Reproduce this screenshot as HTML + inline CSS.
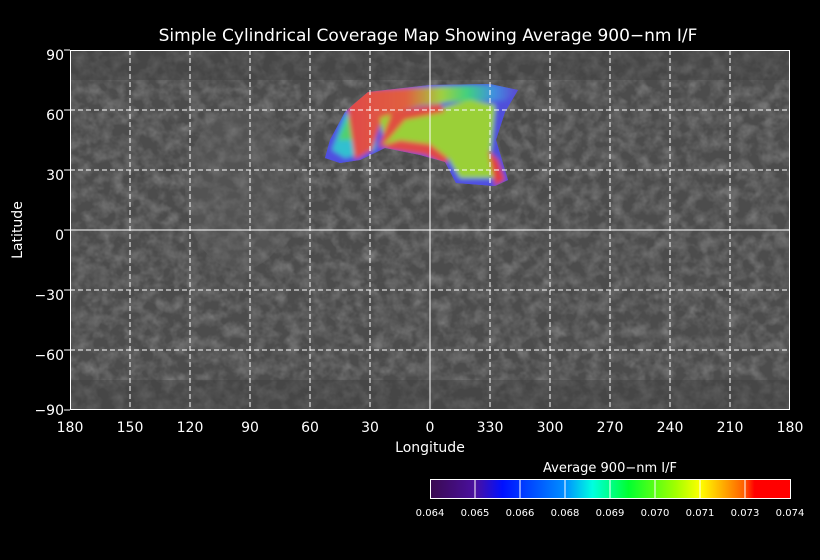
<!DOCTYPE html>
<html><head><meta charset="utf-8"><style>
body{margin:0;background:#000;width:820px;height:560px;overflow:hidden}
svg{display:block}
text{font-family:"DejaVu Sans","Liberation Sans",sans-serif;fill:#fff}
</style></head><body>
<svg width="820" height="560" viewBox="0 0 820 560">
<defs>
<filter id="n" x="0" y="0" width="100%" height="100%">
<feTurbulence type="fractalNoise" baseFrequency="0.08" numOctaves="3" seed="4"/>
<feColorMatrix type="matrix" values="0 0 0 0 0.45  0 0 0 0 0.45  0 0 0 0 0.45  0.9 0.9 0.9 0 -1.1"/>
</filter>
<filter id="b"><feGaussianBlur stdDeviation="2.5"/></filter>
<clipPath id="pc"><path d="M325,158 L330,140 L345,112 L355,103 L368,92 L430,85 L490,84 L518,90 L505,112 L496,140 L508,180 L495,186 L456,183 L445,162 L420,155 L385,148 L360,160 L340,163 Z"/></clipPath>
<linearGradient id="cb" x1="0" x2="1">
<stop offset="0" stop-color="#3a0a50"/><stop offset="0.125" stop-color="#4a10a0"/>
<stop offset="0.2" stop-color="#0010ff"/><stop offset="0.375" stop-color="#0090ff"/>
<stop offset="0.45" stop-color="#00ffe0"/><stop offset="0.55" stop-color="#00ff30"/>
<stop offset="0.68" stop-color="#a0ff00"/><stop offset="0.75" stop-color="#ffff00"/>
<stop offset="0.87" stop-color="#ff6000"/><stop offset="0.9" stop-color="#ff0000"/><stop offset="1" stop-color="#ff0000"/>
</linearGradient>
<linearGradient id="tr" x1="0" x2="1">
<stop offset="0" stop-color="#e04848"/><stop offset="0.35" stop-color="#e06040"/>
<stop offset="0.55" stop-color="#a0d040"/><stop offset="0.7" stop-color="#40d080"/>
<stop offset="0.85" stop-color="#4090e0"/><stop offset="1" stop-color="#6040d0"/>
</linearGradient>
</defs>
<text x="428" y="41" font-size="17" text-anchor="middle">Simple Cylindrical Coverage Map Showing Average 900−nm I/F</text>
<rect x="70" y="50" width="720" height="360" fill="#4c4c4c"/>
<rect x="70" y="50" width="720" height="360" filter="url(#n)" opacity="0.45"/>
<ellipse cx="240" cy="190" rx="55" ry="80" fill="#606060" opacity="0.35"/>
<rect x="70" y="50" width="720" height="30" fill="#3e3e3e" opacity="0.4"/>
<rect x="70" y="380" width="720" height="30" fill="#3e3e3e" opacity="0.4"/>
<g clip-path="url(#pc)">
<rect x="320" y="80" width="200" height="110" fill="#5050e0"/>
<g filter="url(#b)">
<rect x="320" y="80" width="200" height="110" fill="#5050e0"/>
<path d="M332,150 L345,115 L360,100 L380,95 L375,150 L345,158 Z" fill="#30c0d0"/>
<path d="M338,140 L350,112 L365,100 L378,110 L372,140 Z" fill="#50d070"/>
<path d="M345,90 L520,84 L515,100 L450,102 L420,106 L395,112 L380,125 L372,150 L355,160 Z" fill="url(#tr)"/>
<path d="M380,118 L405,110 L440,108 L470,100 L495,105 L495,140 L500,178 L460,178 L448,158 L430,150 L400,145 L385,148 Z" fill="#9ad038"/>
<path d="M392,112 L440,104 L445,112 L405,120 L388,140 L378,148 Z" fill="#e05040"/>
<path d="M380,146 L400,140 L430,144 L448,158 L445,165 L425,155 L390,150 Z" fill="#e04848"/>
<path d="M495,110 L515,92 L505,112 L497,140 L508,182 L498,186 L490,160 Z" fill="#5050d8"/>
<path d="M488,150 L498,160 L505,180 L495,186 Z" fill="#e04040"/>
</g>
</g>
<g stroke="#fff" stroke-width="1" fill="none">
<g stroke-dasharray="5,3">
<path d="M130,50V410M190,50V410M250,50V410M310,50V410M370,50V410M490,50V410M550,50V410M610,50V410M670,50V410M730,50V410"/>
<path d="M70,110H790M70,170H790M70,290H790M70,350H790"/>
</g>
<path d="M430,50V410M70,230H790"/>
<rect x="70.5" y="50.5" width="719" height="359"/>
<path d="M70,50h-6M70,110h-6M70,170h-6M70,230h-6M70,290h-6M70,350h-6M70,410h-6"/>
</g>
<g font-size="14" text-anchor="end">
<text x="64" y="60">90</text><text x="64" y="120">60</text><text x="64" y="180">30</text><text x="64" y="240">0</text>
<text x="64" y="300">−30</text><text x="64" y="360">−60</text><text x="64" y="415">−90</text>
</g>
<g font-size="14" text-anchor="middle">
<text x="70" y="432">180</text><text x="130" y="432">150</text><text x="190" y="432">120</text><text x="250" y="432">90</text>
<text x="310" y="432">60</text><text x="370" y="432">30</text><text x="430" y="432">0</text><text x="490" y="432">330</text>
<text x="550" y="432">300</text><text x="610" y="432">270</text><text x="670" y="432">240</text><text x="730" y="432">210</text><text x="790" y="432">180</text>
<text x="430" y="452">Longitude</text>
<text x="610" y="472" font-size="13">Average 900−nm I/F</text>
</g>
<text transform="translate(22,230) rotate(-90)" font-size="14" text-anchor="middle">Latitude</text>
<rect x="430.5" y="479.5" width="360" height="19" fill="url(#cb)" stroke="#fff"/>
<g stroke="#fff"><path d="M475,480v18M520,480v18M565,480v18M610,480v18M655,480v18M700,480v18M745,480v18"/></g>
<g font-size="10" text-anchor="middle">
<text x="430" y="516">0.064</text><text x="475" y="516">0.065</text><text x="520" y="516">0.066</text><text x="565" y="516">0.068</text>
<text x="610" y="516">0.069</text><text x="655" y="516">0.070</text><text x="700" y="516">0.071</text><text x="745" y="516">0.073</text><text x="790" y="516">0.074</text>
</g>
</svg>
</body></html>
